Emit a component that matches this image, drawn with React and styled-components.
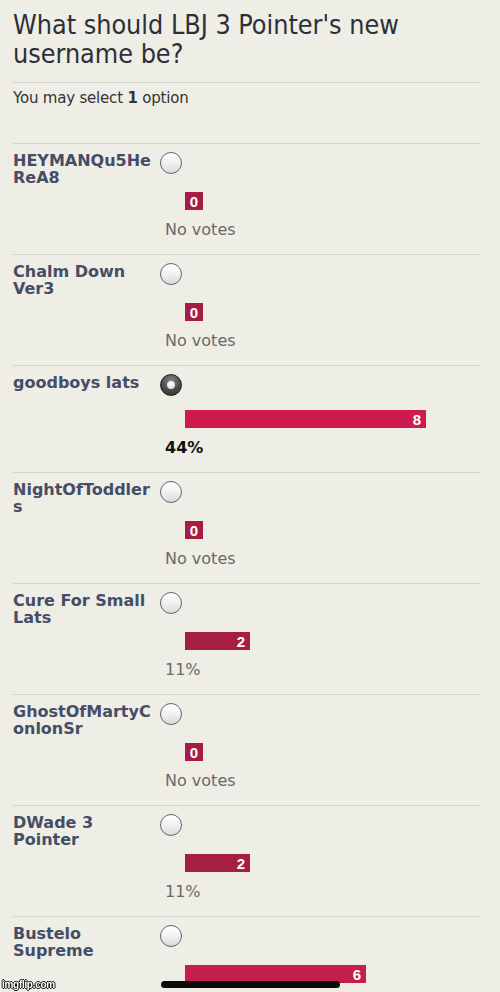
import React from 'react';
import styled, { createGlobalStyle } from 'styled-components';

const GlobalStyle = createGlobalStyle`
  html, body {
    margin: 0;
    padding: 0;
    background: #eeede6;
  }
  body {
    font-family: "DejaVu Sans", Verdana, sans-serif;
  }
`;

const Page = styled.div`
  background: #eeede6;
  padding: 0 19px 0 13px;
`;

const Header = styled.div`
  padding: 10px 0 14px;
  border-bottom: 1px solid #d3d2cb;
`;

const Title = styled.h1`
  margin: 0;
  font-family: "DejaVu Sans", sans-serif;
  font-stretch: condensed;
  font-size: 26.7px;
  line-height: 29px;
  font-weight: 400;
  color: #2c3036;
`;

const Hint = styled.div`
  padding: 5px 0 35px;
  font-size: 15px;
  line-height: 20px;
  letter-spacing: -0.2px;
  color: #333;
  border-bottom: 1px solid #d3d2cb;

  b {
    font-weight: 700;
  }
`;

const Row = styled.div`
  padding: 8px 0 14px;
  border-bottom: 1px solid #d3d2cb;
`;

const ChoiceLine = styled.div`
  display: flex;
  align-items: flex-start;
  min-height: 30px;
`;

const Name = styled.div`
  width: 142px;
  font-size: 16px;
  line-height: 17px;
  font-weight: 700;
  color: #454e64;
  overflow-wrap: anywhere;
`;

const Radio = styled.span`
  position: relative;
  flex: none;
  width: 22px;
  height: 22px;
  margin-left: 5px;
  box-sizing: border-box;
  border-radius: 50%;
  border: 1px solid ${({ $checked }) => ($checked ? '#222' : '#666')};
  background: ${({ $checked }) =>
    $checked
      ? 'radial-gradient(circle at 50% 30%, #8a8a8a 0%, #4a4a4a 55%, #2a2a2a 100%)'
      : 'linear-gradient(#ffffff 0%, #f3f3f3 45%, #d9d9d9 100%)'};

  &::after {
    content: '';
    display: ${({ $checked }) => ($checked ? 'block' : 'none')};
    position: absolute;
    left: 6px;
    top: 6px;
    width: 8px;
    height: 8px;
    border-radius: 50%;
    background: radial-gradient(circle at 50% 35%, #ffffff 0%, #e6e6e6 60%, #bdbdbd 100%);
  }
`;

const Results = styled.div`
  margin: 6px 0 0 152px;
`;

const Bar = styled.div`
  margin-left: 20px;
  height: 18px;
  box-sizing: border-box;
  display: flex;
  align-items: center;
  justify-content: ${({ $center }) => ($center ? 'center' : 'flex-end')};
  padding-right: ${({ $center }) => ($center ? '0' : '5px')};
  background: ${({ $color }) => $color};
  color: #fff;
  font-family: "Liberation Sans", Arial, sans-serif;
  font-size: 15px;
  font-weight: 700;
`;

const Votes = styled.div`
  margin-top: 10px;
  font-size: 16px;
  line-height: 20px;
  color: ${({ $mine }) => ($mine ? '#111' : '#6a6a6a')};
  font-weight: ${({ $mine }) => ($mine ? 700 : 400)};
`;

const HomeBar = styled.div`
  position: fixed;
  left: 161px;
  top: 981px;
  width: 179px;
  height: 7px;
  border-radius: 4px;
  background: #0b0b0b;
`;

const Watermark = styled.div`
  position: fixed;
  left: 2px;
  top: 979px;
  font-family: "Liberation Sans", Arial, sans-serif;
  font-size: 10px;
  font-weight: 700;
  letter-spacing: -0.3px;
  color: #fff;
  text-shadow: -1px 0 #111, 1px 0 #111, 0 -1px #111, 0 1px #111;
`;

const options = [
  { name: 'HEYMANQu5HeReA8', votes: 0, width: 18, color: '#a51e41' },
  { name: 'Chalm Down Ver3', votes: 0, width: 18, color: '#a51e41' },
  { name: 'goodboys lats', votes: 8, pct: '44%', width: 241, color: '#cf1a4f', mine: true },
  { name: 'NightOfToddlers', votes: 0, width: 18, color: '#a51e41' },
  { name: 'Cure For Small Lats', votes: 2, pct: '11%', width: 65, color: '#a61f42' },
  { name: 'GhostOfMartyConlonSr', votes: 0, width: 18, color: '#a51e41' },
  { name: 'DWade 3 Pointer', votes: 2, pct: '11%', width: 65, color: '#a61f42' },
  { name: 'Bustelo Supreme', votes: 6, pct: '33%', width: 181, color: '#c41e4b' },
];

export default function App() {
  return (
    <>
      <GlobalStyle />
      <Page>
        <Header>
          <Title>What should LBJ 3 Pointer's new username be?</Title>
        </Header>
        <Hint>
          You may select <b>1</b> option
        </Hint>
        {options.map((opt) => (
          <Row key={opt.name}>
            <ChoiceLine>
              <Name>{opt.name}</Name>
              <Radio $checked={opt.mine} />
            </ChoiceLine>
            <Results>
              <Bar $color={opt.color} $center={opt.votes === 0} style={{ width: opt.width }}>
                {opt.votes}
              </Bar>
              <Votes $mine={opt.mine}>{opt.votes === 0 ? 'No votes' : opt.pct}</Votes>
            </Results>
          </Row>
        ))}
      </Page>
      <Watermark>imgflip.com</Watermark>
      <HomeBar />
    </>
  );
}
